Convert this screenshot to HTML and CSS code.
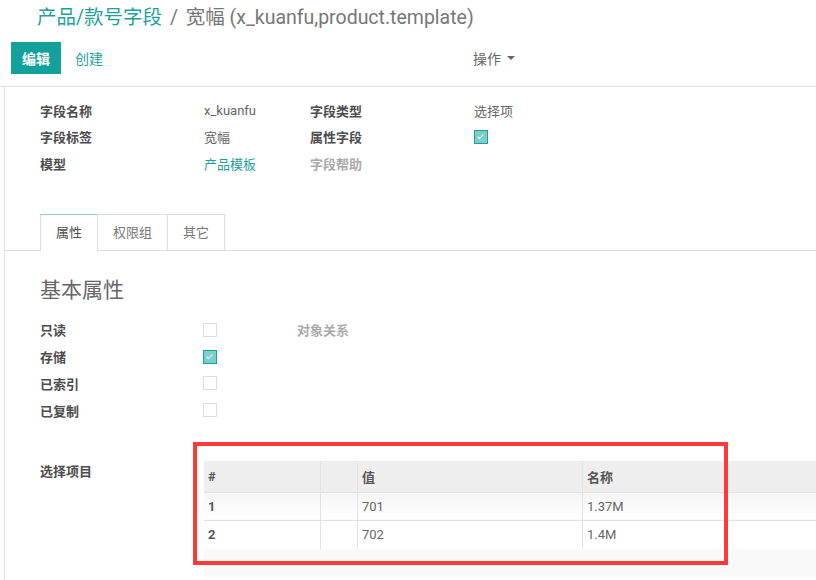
FILE: index.html
```html
<!DOCTYPE html>
<html lang="zh">
  <head>
    <meta charset="UTF-8" />
    <title>宽幅 (x_kuanfu,product.template)</title>
    <link rel="stylesheet" href="styles.css">
  </head>
  <body>
    <div class="control-panel">
      <div class="breadcrumb">
        <a class="crumb">产品/款号字段</a>
        <span class="sep">/</span>
        <span class="current">宽幅 (x_kuanfu,product.template)</span>
      </div>
      <div class="cp-buttons">
        <div class="left-buttons">
          <button class="btn-primary">编辑</button>
          <button class="btn-link">创建</button>
        </div>
        <div class="actions">操作 <span class="caret"></span></div>
      </div>
    </div>

    <div class="sheet">
      <div class="field-group">
        <div class="lbl">字段名称</div>
        <div class="val">x_kuanfu</div>
        <div class="lbl">字段类型</div>
        <div class="val">选择项</div>

        <div class="lbl">字段标签</div>
        <div class="val">宽幅</div>
        <div class="lbl">属性字段</div>
        <div class="val"><span class="check checked"></span></div>

        <div class="lbl">模型</div>
        <div class="val link">产品模板</div>
        <div class="lbl muted">字段帮助</div>
        <div class="val"></div>
      </div>

      <div class="tabs">
        <div class="tab active">属性</div>
        <div class="tab">权限组</div>
        <div class="tab">其它</div>
      </div>

      <div class="tab-content">
        <h2>基本属性</h2>
        <div class="prop-group">
          <div class="lbl">只读</div>
          <div class="val"><span class="check"></span></div>
          <div class="lbl muted">对象关系</div>

          <div class="lbl">存储</div>
          <div class="val"><span class="check checked"></span></div>
          <div></div>

          <div class="lbl">已索引</div>
          <div class="val"><span class="check"></span></div>
          <div></div>

          <div class="lbl">已复制</div>
          <div class="val"><span class="check"></span></div>
          <div></div>
        </div>

        <div class="selection-row">
          <div class="lbl sel-label">选择项目</div>
          <div class="table-wrap">
            <table class="list">
              <thead>
                <tr>
                  <th class="c-seq">#</th>
                  <th class="c-handle"></th>
                  <th class="c-value">值</th>
                  <th>名称</th>
                </tr>
              </thead>
              <tbody>
                <tr class="first">
                  <td class="num">1</td>
                  <td></td>
                  <td>701</td>
                  <td>1.37M</td>
                </tr>
                <tr>
                  <td class="num">2</td>
                  <td></td>
                  <td>702</td>
                  <td>1.4M</td>
                </tr>
              </tbody>
            </table>
            <div class="list-footer"></div>
          </div>
        </div>
      </div>
    </div>

    <div class="highlight"></div>
  </body>
</html>
```

FILE: styles.css
```css
body {
  margin: 0;
  padding: 0;
  font-family: Roboto, "Noto Sans CJK SC", sans-serif;
  font-size: 13px;
  color: #666;
  background: #fff;
  position: relative;
  height: 580px;
  overflow: hidden;
}
.control-panel {
  padding: 6px 0 12px 11px;
  border-bottom: 1px solid #e2e2e2;
}
.breadcrumb {
  padding-left: 26px;
  font-size: 19.5px;
  line-height: 24px;
  color: #777;
}
.breadcrumb .crumb {
  color: #1f9f9a;
}
.breadcrumb .sep {
  margin: 0 3px;
}
.cp-buttons {
  display: flex;
  align-items: center;
  margin-top: 12px;
  width: 504px;
  justify-content: space-between;
}
.left-buttons {
  display: flex;
  align-items: center;
}
.btn-primary {
  width: 50px;
  height: 32px;
  border: none;
  background: #15a19b;
  color: #fff;
  font-family: inherit;
  font-size: 14px;
  font-weight: 700;
  padding: 0;
}
.btn-link {
  border: none;
  background: none;
  color: #1f9f9a;
  font-family: inherit;
  font-size: 14px;
  margin-left: 9px;
  padding: 0 5px;
}
.actions {
  font-size: 14px;
  color: #666;
  display: flex;
  align-items: center;
}
.caret {
  display: inline-block;
  margin-left: 6px;
  border-left: 4px solid transparent;
  border-right: 4px solid transparent;
  border-top: 4px solid #666;
}
.sheet {
  margin-left: 4px;
  border-left: 1px solid #e2e2e2;
  height: 500px;
}
.field-group {
  display: grid;
  grid-template-columns: 164px 106px 164px 1fr;
  grid-auto-rows: 26.5px;
  align-items: center;
  padding: 10px 0 0 35px;
}
.lbl {
  font-weight: 700;
  color: #4c4c4c;
}
.lbl.muted {
  color: #aaa;
}
.val {
  color: #666;
  display: flex;
  align-items: center;
}
.val.link {
  color: #1f9f9a;
}
.check {
  display: inline-block;
  width: 12px;
  height: 12px;
  border: 1px solid #ddd;
  background: #fff;
  position: relative;
}
.check.checked {
  background: #7bcfca;
  border-color: #1f9f9a;
}
.check.checked::after {
  content: "";
  position: absolute;
  left: 4px;
  top: 2px;
  width: 2px;
  height: 5px;
  border-right: 1.5px solid #fff;
  border-bottom: 1.5px solid #fff;
  transform: rotate(45deg);
}
.tabs {
  display: flex;
  margin-top: 37px;
  padding-left: 35px;
  border-bottom: 1px solid #ddd;
}
.tab {
  height: 35px;
  line-height: 35px;
  padding: 0 15px;
  border: 1px solid #ddd;
  border-bottom: none;
  border-left: none;
  color: #777;
  margin-bottom: -1px;
}
.tab:first-child {
  border-left: 1px solid #ddd;
}
.tab.active {
  color: #4c4c4c;
  background: #fff;
  border-top: 1px solid #8bcbc7;
  height: 36px;
}
.tab-content {
  padding-left: 35px;
}
.tab-content h2 {
  margin: 25px 0 0;
  font-size: 21px;
  line-height: 28px;
  font-weight: 400;
  color: #666;
}
.prop-group {
  display: grid;
  grid-template-columns: 163px 94px 1fr;
  grid-auto-rows: 26.8px;
  align-items: center;
  margin-top: 13px;
}
.selection-row {
  display: flex;
  margin-top: 37px;
}
.sel-label {
  width: 164px;
  flex: none;
  padding-top: 0;
}
.table-wrap {
  flex: 1;
}
.list {
  width: 100%;
  border-collapse: collapse;
  font-size: 13px;
}
.list th {
  background: #eee;
  height: 31px;
  text-align: left;
  font-weight: 700;
  color: #555;
  padding: 0 4px;
  border-left: 1px solid #e2e2e2;
  border-bottom: 1px solid #e2e2e2;
}
.list th:first-child,
.list td:first-child {
  border-left: none;
}
.list td {
  height: 27px;
  padding: 0 4px;
  color: #666;
  border-left: 1px solid #e2e2e2;
  border-bottom: 1px solid #e2e2e2;
}
.list tbody tr:last-child td {
  border-bottom: none;
  height: 28px;
}
.list tr.first td {
  background: linear-gradient(#f5f5f5, #fff);
}
.list td.num {
  font-weight: 700;
  color: #555;
}
.c-seq {
  width: 108px;
}
.c-handle {
  width: 28px;
}
.c-value {
  width: 216px;
}
.list-footer {
  height: 28px;
  background: #f9f9f9;
}
.highlight {
  position: absolute;
  left: 193px;
  top: 442px;
  width: 527px;
  height: 115px;
  border: 4px solid #fc3a3a;
}
```
